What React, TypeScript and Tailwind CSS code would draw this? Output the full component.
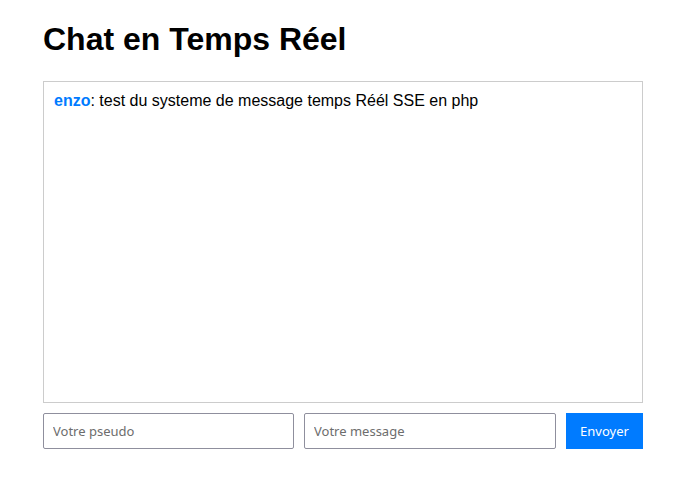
import React, { useState } from 'react';

type Message = { user: string; text: string };

export default function App() {
  const [messages] = useState<Message[]>([
    { user: 'enzo', text: 'test du systeme de message temps Réél SSE en php' },
  ]);
  const [pseudo, setPseudo] = useState('');
  const [message, setMessage] = useState('');

  return (
    <div className="min-h-screen bg-white font-['Liberation_Sans',Arial,sans-serif] text-black">
      <div className="ml-[43px] w-[600px] pt-[21px]">
        <h1 className="text-[32px] leading-[37px] font-bold mb-[23px]">Chat en Temps Réel</h1>

        <div className="h-[322px] border border-[#cccccc] p-[10px] overflow-y-auto text-[16px] leading-[18px]">
          {messages.map((m, i) => (
            <div key={i} className="mb-[5px]">
              <span className="font-bold text-[#007bff]">{m.user}</span>: {m.text}
            </div>
          ))}
        </div>

        <div className="flex gap-[10px] mt-[10px] font-['Noto_Sans',sans-serif] text-[13px]">
          <input
            type="text"
            value={pseudo}
            onChange={(e) => setPseudo(e.target.value)}
            placeholder="Votre pseudo"
            className="w-[251px] h-[36px] border border-[#8f8f9d] rounded-[2px] px-[9px] outline-none placeholder:text-[#6d6d6d]"
          />
          <input
            type="text"
            value={message}
            onChange={(e) => setMessage(e.target.value)}
            placeholder="Votre message"
            className="w-[252px] h-[36px] border border-[#8f8f9d] rounded-[2px] px-[9px] outline-none placeholder:text-[#6d6d6d]"
          />
          <button className="flex-1 h-[36px] pt-[2px] bg-[#007bff] text-white cursor-pointer">Envoyer</button>
        </div>
      </div>
    </div>
  );
}
